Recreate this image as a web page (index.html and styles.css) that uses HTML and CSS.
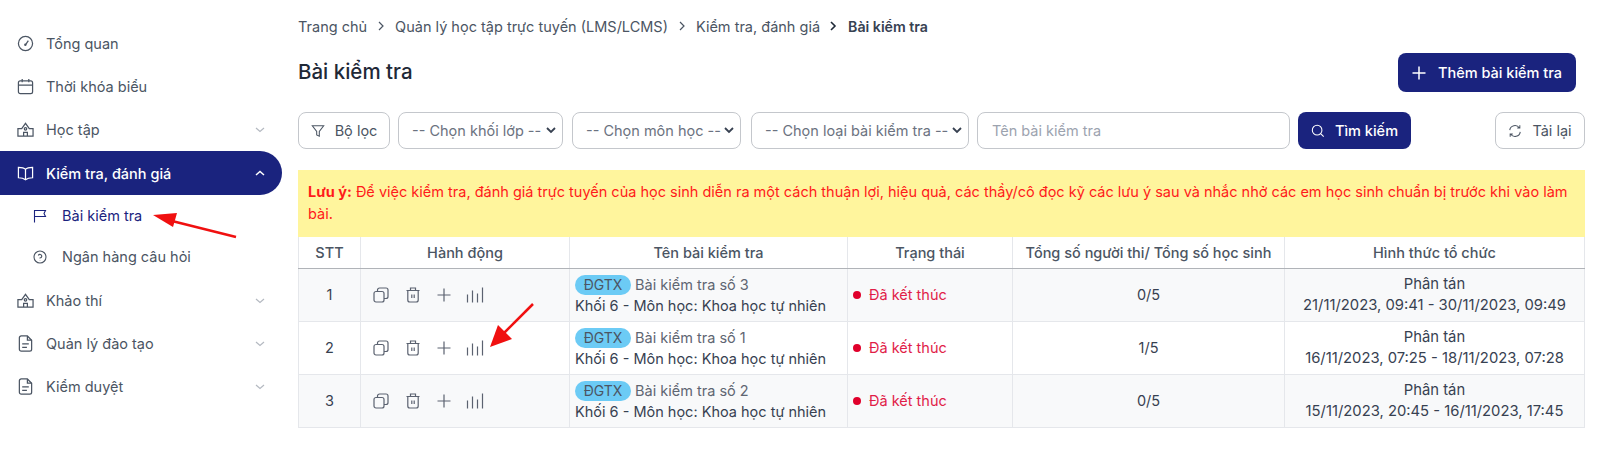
FILE: index.html
```html
<!DOCTYPE html>
<html lang="vi">
<head>
    <meta charset="UTF-8">
    <meta name="viewport" content="width=device-width, initial-scale=1.0">
    <title>Bài kiểm tra</title>
    <link rel="stylesheet" href="styles.css">
</head>
<body>
    <svg class="defs" width="0" height="0">
        <symbol id="i-home" viewBox="0 0 18 18"><path d="M1 8h4l4-5.500L13 8h4v8H1z"/><path d="M7 16v-4h4v4"/><circle cx="9" cy="8.300" r="1.300"/></symbol>
        <symbol id="i-doc" viewBox="0 0 18 18"><path d="M2.500 3a2 2 0 0 1 2-2H11l4.500 4.500V15a2 2 0 0 1-2 2h-9a2 2 0 0 1-2-2z"/><path d="M11 1v4.500h4.500M5.500 9.500h7M5.500 13h5"/></symbol>
        <symbol id="i-down" viewBox="0 0 14 14"><path d="m3 5 4 3.500L11 5"/></symbol>
        <symbol id="i-copy" viewBox="0 0 16 16"><rect x="1" y="4.500" width="10" height="10.500" rx="2"/><path d="M4.500 4.500V3a2 2 0 0 1 2-2H13a2 2 0 0 1 2 2v6.500a2 2 0 0 1-2 2h-2"/></symbol>
        <symbol id="i-trash" viewBox="0 0 16 16"><path d="M1.500 3.500h13M5.500 3.500V1h5v2.500M2.800 3.500V13a2 2 0 0 0 2 2h6.400a2 2 0 0 0 2-2V3.500M6.800 7.500v3.500M9.200 7.500v3.500"/></symbol>
        <symbol id="i-plus" viewBox="0 0 16 16"><path d="M7 1.500v13M.5 8h13"/></symbol>
        <symbol id="i-chart" viewBox="0 0 18 16"><path d="M1.500 7.500v8M6.500 3.500v12M11.500 6.500v9M16.500 .5v15"/></symbol>
    </svg>

    <div class="layout">
        <!-- Menu bên trái -->
        <nav class="sidebar">
            <a class="nav-item">
                <svg class="nav-icon" viewBox="0 0 18 18"><circle cx="9" cy="9" r="7.500"/><path d="M9 10.500 12 6"/><circle cx="8.800" cy="10.300" r=".6"/></svg>
                <span>Tổng quan</span>
            </a>
            <a class="nav-item">
                <svg class="nav-icon" viewBox="0 0 18 18"><rect x="1.500" y="3" width="15" height="13.500" rx="2"/><path d="M1.500 7.500h15M5.500 1v3.500M12.500 1v3.500"/></svg>
                <span>Thời khóa biểu</span>
            </a>
            <a class="nav-item">
                <svg class="nav-icon"><use href="#i-home"/></svg>
                <span>Học tập</span>
                <svg class="nav-caret"><use href="#i-down"/></svg>
            </a>
            <a class="nav-item active">
                <svg class="nav-icon" viewBox="0 0 18 18"><path d="M9 4.500C7.500 3 5 2.500 1.500 2.500v11c3.500 0 5.500.5 7.500 2 2-1.500 4-2 7.500-2v-11C13 2.500 10.500 3 9 4.500zM9 4.500v11"/></svg>
                <span>Kiểm tra, đánh giá</span>
                <svg class="nav-caret up"><use href="#i-down"/></svg>
            </a>
            <a class="nav-sub current">
                <svg class="sub-icon" viewBox="0 0 14 14"><path d="M1.500 13.500V1.500h11l-1.500 3 1.500 3h-11"/></svg>
                <span>Bài kiểm tra</span>
            </a>
            <a class="nav-sub">
                <svg class="sub-icon" viewBox="0 0 14 14"><circle cx="7" cy="7" r="6"/><path d="M5.300 5.500A1.800 1.800 0 1 1 7 8v.5M7 10.200v.3"/></svg>
                <span>Ngân hàng câu hỏi</span>
            </a>
            <a class="nav-item">
                <svg class="nav-icon"><use href="#i-home"/></svg>
                <span>Khảo thí</span>
                <svg class="nav-caret"><use href="#i-down"/></svg>
            </a>
            <a class="nav-item">
                <svg class="nav-icon"><use href="#i-doc"/></svg>
                <span>Quản lý đào tạo</span>
                <svg class="nav-caret"><use href="#i-down"/></svg>
            </a>
            <a class="nav-item">
                <svg class="nav-icon"><use href="#i-doc"/></svg>
                <span>Kiểm duyệt</span>
                <svg class="nav-caret"><use href="#i-down"/></svg>
            </a>
        </nav>

        <main class="content">
            <div class="breadcrumb">
                <span>Trang chủ</span>
                <svg class="crumb-sep" viewBox="0 0 8 10"><path d="m2 1 4 4-4 4"/></svg>
                <span>Quản lý học tập trực tuyến (LMS/LCMS)</span>
                <svg class="crumb-sep" viewBox="0 0 8 10"><path d="m2 1 4 4-4 4"/></svg>
                <span>Kiểm tra, đánh giá</span>
                <svg class="crumb-sep dark" viewBox="0 0 8 10"><path d="m2 1 4 4-4 4"/></svg>
                <strong>Bài kiểm tra</strong>
            </div>

            <div class="page-head">
                <h1>Bài kiểm tra</h1>
                <button class="btn btn-primary btn-add">
                    <svg class="btn-icon"><use href="#i-plus"/></svg>
                    Thêm bài kiểm tra
                </button>
            </div>

            <div class="filters">
                <button class="btn btn-outline btn-filter">
                    <svg class="btn-icon small" viewBox="0 0 16 16"><path d="M1.500 2h13L9.500 8.500V14l-3-1.500v-4z"/></svg>
                    Bộ lọc
                </button>
                <select class="field sel-grade"><option>-- Chọn khối lớp --</option></select>
                <select class="field sel-subject"><option>-- Chọn môn học --</option></select>
                <select class="field sel-type"><option>-- Chọn loại bài kiểm tra --</option></select>
                <input class="field search-input" type="text" placeholder="Tên bài kiểm tra">
                <button class="btn btn-primary btn-search">
                    <svg class="btn-icon small" viewBox="0 0 16 16"><circle cx="7" cy="7" r="5.500"/><path d="m11 11 3.500 3.500"/></svg>
                    Tìm kiếm
                </button>
                <button class="btn btn-outline btn-reload">
                    <svg class="btn-icon small" viewBox="0 0 16 16"><path d="M2 7a6 6 0 0 1 11-2.500M14 9a6 6 0 0 1-11 2.500M13.500 1.500v3h-3M2.500 14.500v-3h3"/></svg>
                    Tải lại
                </button>
            </div>

            <div class="notice">
                <b>Lưu ý:</b> Để việc kiểm tra, đánh giá trực tuyến của học sinh diễn ra một cách thuận lợi, hiệu quả, các thầy/cô đọc kỹ các lưu ý sau và nhắc nhở các em học sinh chuẩn bị trước khi vào làm bài.
            </div>

            <table class="exam-table">
                <colgroup>
                    <col class="col-stt">
                    <col class="col-action">
                    <col class="col-name">
                    <col class="col-status">
                    <col class="col-total">
                    <col class="col-form">
                </colgroup>
                <thead>
                    <tr>
                        <th>STT</th>
                        <th>Hành động</th>
                        <th>Tên bài kiểm tra</th>
                        <th>Trạng thái</th>
                        <th>Tổng số người thi/ Tổng số học sinh</th>
                        <th>Hình thức tổ chức</th>
                    </tr>
                </thead>
                <tbody>
                    <tr>
                        <td class="center">1</td>
                        <td><div class="actions">
                            <svg class="act-icon"><use href="#i-copy"/></svg>
                            <svg class="act-icon"><use href="#i-trash"/></svg>
                            <svg class="act-icon"><use href="#i-plus"/></svg>
                            <svg class="act-icon chart"><use href="#i-chart"/></svg>
                        </div></td>
                        <td class="name-cell"><span class="tag">ĐGTX</span> <span class="exam-title">Bài kiểm tra số 3</span><br>Khối 6 - Môn học: Khoa học tự nhiên</td>
                        <td><span class="status"><i class="dot"></i>Đã kết thúc</span></td>
                        <td class="center">0/5</td>
                        <td class="center form-cell">Phân tán<br>21/11/2023, 09:41 - 30/11/2023, 09:49</td>
                    </tr>
                    <tr>
                        <td class="center">2</td>
                        <td><div class="actions">
                            <svg class="act-icon"><use href="#i-copy"/></svg>
                            <svg class="act-icon"><use href="#i-trash"/></svg>
                            <svg class="act-icon"><use href="#i-plus"/></svg>
                            <svg class="act-icon chart"><use href="#i-chart"/></svg>
                        </div></td>
                        <td class="name-cell"><span class="tag">ĐGTX</span> <span class="exam-title">Bài kiểm tra số 1</span><br>Khối 6 - Môn học: Khoa học tự nhiên</td>
                        <td><span class="status"><i class="dot"></i>Đã kết thúc</span></td>
                        <td class="center">1/5</td>
                        <td class="center form-cell">Phân tán<br>16/11/2023, 07:25 - 18/11/2023, 07:28</td>
                    </tr>
                    <tr>
                        <td class="center">3</td>
                        <td><div class="actions">
                            <svg class="act-icon"><use href="#i-copy"/></svg>
                            <svg class="act-icon"><use href="#i-trash"/></svg>
                            <svg class="act-icon"><use href="#i-plus"/></svg>
                            <svg class="act-icon chart"><use href="#i-chart"/></svg>
                        </div></td>
                        <td class="name-cell"><span class="tag">ĐGTX</span> <span class="exam-title">Bài kiểm tra số 2</span><br>Khối 6 - Môn học: Khoa học tự nhiên</td>
                        <td><span class="status"><i class="dot"></i>Đã kết thúc</span></td>
                        <td class="center">0/5</td>
                        <td class="center form-cell">Phân tán<br>15/11/2023, 20:45 - 16/11/2023, 17:45</td>
                    </tr>
                </tbody>
            </table>
        </main>
    </div>

    <!-- Šipky přes obrázek -->
    <svg class="callout" width="1600" height="449" viewBox="0 0 1600 449">
        <path class="arrow-line" d="M236 237 172 221"/>
        <path class="arrow-head" d="M153 215 177 213 173 227z"/>
        <path class="arrow-line" d="M533 304 503 334"/>
        <path class="arrow-head" d="M490 347 498 325 512 339z"/>
    </svg>
</body>
</html>
```

FILE: styles.css
```css
* {
    box-sizing: border-box;
}

body {
    font-family: Inter, "Noto Sans", sans-serif;
    font-size: 14.500px;
    color: #374151;
    background-color: #ffffff;
    margin: 0;
    padding: 0;
    overflow: hidden;
}

.defs {
    position: absolute;
}

.layout {
    display: flex;
    height: 449px;
}

/* Menu */
.sidebar {
    width: 282px;
    flex-shrink: 0;
    padding-top: 22px;
}

.nav-item,
.nav-sub {
    display: flex;
    align-items: center;
    color: #4b5563;
}

.nav-item {
    height: 43px;
    padding: 0 15px 0 17px;
}

.nav-item span {
    flex: 1;
}

.nav-icon {
    width: 17px;
    height: 17px;
    margin-right: 12px;
    fill: none;
    stroke: currentColor;
    stroke-width: 1.300;
}

.nav-caret {
    width: 14px;
    height: 14px;
    fill: none;
    stroke: #b4b9c1;
    stroke-width: 1.200;
}

.nav-caret.up {
    transform: rotate(180deg);
    stroke: #ffffff;
    stroke-width: 1.500;
}

.nav-item.active {
    height: 44px;
    background-color: #1a237e;
    color: #ffffff;
    border-radius: 0 22px 22px 0;
    font-weight: 500;
}

.nav-sub {
    height: 41px;
    padding-left: 33px;
}

.nav-sub + .nav-item {
    margin-top: 2px;
}

.nav-sub.current {
    color: #1a237e;
}

.sub-icon {
    width: 14px;
    height: 14px;
    margin-right: 15px;
    fill: none;
    stroke: currentColor;
    stroke-width: 1.100;
}

/* Obsah */
.content {
    flex: 1;
    padding: 0 15px 0 16px;
}

.breadcrumb {
    display: flex;
    align-items: center;
    height: 52px;
    color: #4b5563;
}

.breadcrumb strong {
    font-size: 14.200px;
    font-weight: 600;
    color: #374151;
}

.crumb-sep {
    width: 8px;
    height: 10px;
    margin: 0 10px;
    fill: none;
    stroke: #4b5563;
    stroke-width: 1.200;
}

.crumb-sep.dark {
    stroke: #1f2937;
    stroke-width: 1.600;
    margin: 0 11px 0 9px;
}

.page-head {
    display: flex;
    justify-content: space-between;
    align-items: center;
    height: 39px;
    margin-top: 1px;
    padding-right: 9px;
}

h1 {
    font-size: 20.500px;
    font-weight: 500;
    color: #1f2937;
    margin: 0 0 2px;
}

.btn {
    display: inline-flex;
    align-items: center;
    justify-content: center;
    height: 37px;
    font-family: inherit;
    font-size: 14.500px;
    border-radius: 8px;
    padding: 0;
    cursor: pointer;
}

.btn-primary {
    background-color: #1a237e;
    color: #ffffff;
    border: none;
    font-weight: 500;
}

.btn-outline {
    background-color: #ffffff;
    color: #4b5563;
    border: 1px solid #c4c7cc;
}

.btn-icon {
    width: 16px;
    height: 16px;
    margin-right: 10px;
    fill: none;
    stroke: currentColor;
    stroke-width: 1.500;
}

.btn-icon.small {
    width: 14px;
    height: 14px;
    stroke-width: 1.200;
}

.btn-add {
    width: 178px;
    height: 39px;
}

.filters {
    display: flex;
    align-items: center;
    margin-top: 20px;
    gap: 8px;
}

.field {
    height: 37px;
    font-family: inherit;
    font-size: 14.500px;
    color: #6b7280;
    background-color: #ffffff;
    border: 1px solid #c4c7cc;
    border-radius: 8px;
    padding: 0 0 0 13px;
}

select.field {
    appearance: none;
    background-image: url("data:image/svg+xml,%3Csvg xmlns='http://www.w3.org/2000/svg' width='10' height='7'%3E%3Cpath d='m1 1 4 4 4-4' fill='none' stroke='%23374151' stroke-width='1.800'/%3E%3C/svg%3E");
    background-repeat: no-repeat;
    background-position: right 6px center;
}

.btn-filter {
    width: 92px;
}

.sel-grade {
    width: 165px;
}

.sel-subject {
    width: 169px;
    margin-left: 1px;
}

.sel-type {
    width: 218px;
    margin-left: 2px;
}

.search-input {
    width: 313px;
    padding-left: 14px;
}

.search-input::placeholder {
    color: #9ca3af;
}

.btn-search {
    width: 113px;
}

.btn-reload {
    width: 90px;
    margin-left: auto;
}

.notice {
    margin-top: 21px;
    height: 67px;
    background-color: #fff59d;
    color: #ff1a1a;
    padding: 11px 10px 0;
    line-height: 22px;
}

/* Tabulka */
.exam-table {
    width: 100%;
    border-collapse: collapse;
    table-layout: fixed;
}

.col-stt { width: 62px; }
.col-action { width: 209px; }
.col-name { width: 278px; }
.col-status { width: 165px; }
.col-total { width: 272px; }

th {
    height: 31px;
    font-weight: 500;
    color: #4b5563;
    border-left: 1px solid #e5e7eb;
    border-right: 1px solid #e5e7eb;
    border-bottom: 1px solid #b0b3b8;
    padding: 0;
}

td {
    height: 53px;
    padding: 0;
    line-height: 21px;
    color: #374151;
    border: 1px solid #e5e7eb;
}

tbody tr:nth-child(odd) {
    background-color: #f8f9fa;
}

.center {
    text-align: center;
}

.form-cell {
    font-size: 14.800px;
    padding-top: 1px;
}

.actions {
    display: flex;
    align-items: center;
    padding-left: 12px;
    gap: 16px;
    color: #5b6270;
}

.act-icon {
    width: 16px;
    height: 16px;
    fill: none;
    stroke: currentColor;
    stroke-width: 1.200;
}

.act-icon.chart {
    width: 18px;
    margin-left: -3px;
}

.name-cell {
    padding-left: 5px;
    white-space: nowrap;
}

.exam-title {
    color: #5f6672;
}

.tag {
    display: inline-block;
    width: 56px;
    height: 20px;
    line-height: 20px;
    text-align: center;
    font-size: 14px;
    background-color: #6ccbf5;
    color: #4b5563;
    border-radius: 10px;
}

.status {
    display: flex;
    align-items: center;
    padding-left: 5px;
    color: #e11d48;
}

.dot {
    width: 8px;
    height: 8px;
    border-radius: 50%;
    background-color: #e0002b;
    margin-right: 8px;
}

/* Šipky */
.callout {
    position: absolute;
    left: 0;
    top: 0;
    pointer-events: none;
}

.arrow-line {
    fill: none;
    stroke: #f01010;
    stroke-width: 2.500;
}

.arrow-head {
    fill: #f01010;
}
```
